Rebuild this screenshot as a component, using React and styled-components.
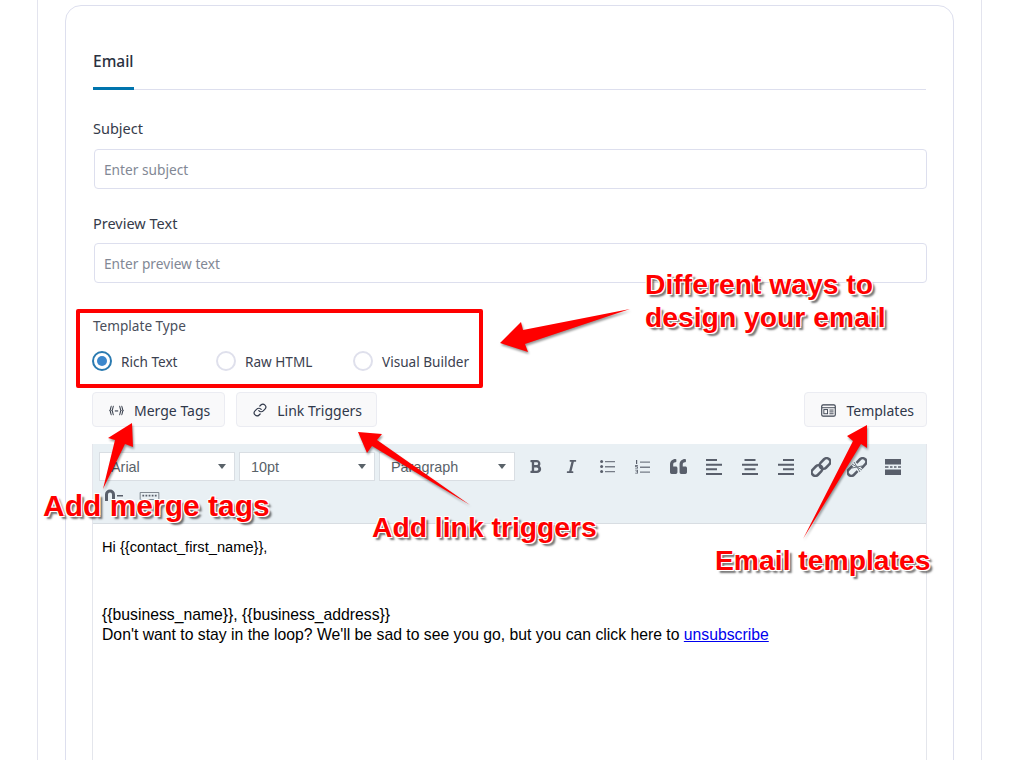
import React from 'react'
import styled, { createGlobalStyle } from 'styled-components'
import { FaBold, FaItalic, FaQuoteLeft } from 'react-icons/fa'
import { Link } from 'lucide-react'

const GlobalStyle = createGlobalStyle`
  html, body {
    margin: 0;
    height: 760px;
    overflow: hidden;
    background: #fff;
    font-family: "Noto Sans", "Open Sans", sans-serif;
  }
`

const Page = styled.div`
  position: relative;
  width: 1020px;
  height: 760px;
  overflow: hidden;
  padding: 0 38px 0 37px;
  box-sizing: border-box;
`

const Frame = styled.div`
  height: 760px;
  box-sizing: border-box;
  border-left: 1px solid #e3e4ee;
  border-right: 1px solid #e3e4ee;
  padding: 5px 27px 0;
`

const Card = styled.div`
  height: 900px;
  box-sizing: border-box;
  border: 1px solid #dddfee;
  border-radius: 16px;
  padding: 38px 27px 0;
`

const Tabs = styled.div`
  height: 46px;
  box-sizing: border-box;
  border-bottom: 1px solid #dddfee;
  display: flex;
`

const Tab = styled.div`
  height: 46px;
  box-sizing: border-box;
  padding-top: 7px;
  border-bottom: 3px solid #0074ad;
  font-size: 15.5px;
  line-height: 20px;
  font-weight: 500;
  color: #2a3140;
`

const Field = styled.div`
  margin-top: ${props => props.$top}px;
  margin-right: -1px;
  padding-left: 1px;
`

const Label = styled.div`
  font-size: 14.5px;
  line-height: 20px;
  color: #353b4a;
  margin-left: -1px;
  margin-bottom: ${props => props.$gap}px;
`

const Input = styled.input`
  display: block;
  width: 100%;
  height: 40px;
  box-sizing: border-box;
  border: 1px solid #dddfee;
  border-radius: 4px;
  padding: 0 9px;
  font-family: inherit;
  font-size: 13.7px;
  color: #333;
  background: #fff;
  &::placeholder {
    color: #828895;
    opacity: 1;
  }
`

const TemplateType = styled.div`
  margin-top: 33px;
`

const SmallLabel = styled.div`
  font-size: 13.6px;
  line-height: 20px;
  color: #4a4f5c;
`

const RadioRow = styled.div`
  display: flex;
  align-items: center;
  margin-top: 15px;
  margin-left: -1px;
  height: 20px;
`

const Radio = styled.label`
  display: flex;
  align-items: center;
  gap: 9px;
  width: ${props => props.$width}px;
  font-size: 13.6px;
  color: #3b4150;
`

const RadioMark = styled.span`
  width: 20px;
  height: 20px;
  flex: none;
  box-sizing: border-box;
  border-radius: 50%;
  border: 2px solid ${props => (props.$on ? '#2a7ab0' : '#dfe0ec')};
  display: flex;
  align-items: center;
  justify-content: center;
  &::after {
    content: '';
    width: 10px;
    height: 10px;
    border-radius: 50%;
    background: ${props => (props.$on ? '#3b87cc' : 'transparent')};
  }
`

const ButtonRow = styled.div`
  display: flex;
  gap: 11px;
  margin-top: 21px;
  margin-left: -1px;
  margin-right: -1px;
`

const ToolButton = styled.button`
  height: 35px;
  box-sizing: border-box;
  display: flex;
  align-items: center;
  gap: 10px;
  padding: 1px ${props => (props.$right ? 12 : 14)}px 0 16px;
  margin-left: ${props => (props.$right ? 'auto' : '0')};
  border: 1px solid #ebecf2;
  border-radius: 4px;
  background: #f9f9fa;
  font-family: inherit;
  font-size: 14px;
  color: #30384a;
`

const Editor = styled.div`
  margin-top: 17px;
  margin-left: -1px;
  margin-right: -1px;
  border-left: 1px solid #e4e6ec;
  border-right: 1px solid #e4e6ec;
`

const Toolbar = styled.div`
  height: 80px;
  box-sizing: border-box;
  background: #e9f0f4;
  border-bottom: 1px solid #d8dde2;
  padding: 8px 0 0 6px;
  display: flex;
  flex-wrap: wrap;
  align-content: flex-start;
`

const Select = styled.div`
  width: 136px;
  height: 29px;
  margin-right: 4px;
  box-sizing: border-box;
  background: #fff;
  border: 1px solid #d9dee3;
  display: flex;
  align-items: center;
  justify-content: space-between;
  padding: 0 8px 0 11px;
  font-family: "Liberation Sans", Arial, sans-serif;
  font-size: 14.4px;
  color: #596269;
  &::after {
    content: '';
    border-left: 4px solid transparent;
    border-right: 4px solid transparent;
    border-top: 5px solid #596269;
  }
`

const IconButton = styled.span`
  width: 35.7px;
  height: 29px;
  flex: none;
  display: flex;
  align-items: center;
  justify-content: center;
  color: #595f6b;
  margin-left: ${props => props.$left || 0}px;
`

const EditorBody = styled.div`
  min-height: 400px;
  padding: 13px 9px 0;
  font-family: "Liberation Sans", Arial, sans-serif;
  font-size: 15.75px;
  line-height: 20px;
  color: #000;
`

const Para = styled.p`
  margin: 0 0 ${props => props.$gap || 0}px;
  font-size: ${props => props.$size || 15.75}px;
`

const Unsub = styled.a`
  color: #0000ee;
  text-decoration: underline;
`

const Highlight = styled.div`
  position: absolute;
  left: 76px;
  top: 309px;
  width: 407px;
  height: 79px;
  box-sizing: border-box;
  border: 4px solid #ff0000;
  border-radius: 2px;
`

const ArrowLayer = styled.svg`
  position: absolute;
  left: 0;
  top: 0;
  width: 1020px;
  height: 760px;
  pointer-events: none;
  filter: drop-shadow(1px 2px 1px rgba(0, 0, 0, 0.4));
`

const Callout = styled.div`
  position: absolute;
  left: ${props => props.$x}px;
  top: ${props => props.$y}px;
  font-family: "Liberation Sans", Arial, sans-serif;
  font-weight: 700;
  font-size: ${props => props.$size || 28.3}px;
  line-height: 33px;
  white-space: nowrap;
  color: #ff0000;
  text-shadow: 1px 1px 0 #fff, -1px -1px 0 #fff, 1px -1px 0 #fff, -1px 1px 0 #fff,
    3px 3px 2px rgba(0, 0, 0, 0.55);
`

const MergeIcon = () => (
  <svg width="15" height="11" viewBox="0 0 17 12" fill="none" stroke="#3c4350" strokeWidth="1.3">
    <path d="M3 1C1.6 1 2.2 5.2 1 6c1.2.8.6 5 2 5M5.4 1C4 1 4.6 5.2 3.4 6c1.2.8.6 5 2 5" />
    <path d="M14 1c1.4 0 .8 4.2 2 5-1.2.8-.6 5-2 5M11.6 1c1.4 0 .8 4.2 2 5-1.2.8-.6 5-2 5" />
    <path d="M6.600 6.500h3.800" />
  </svg>
)

const TemplateIcon = () => (
  <svg width="15" height="13" viewBox="0 0 16 14" fill="none" stroke="#3c4350">
    <rect x="0.7" y="1" width="14.6" height="12" rx="1.500" strokeWidth="1.200" />
    <path d="M1 4h14" strokeWidth="1" />
    <rect x="3" y="6" width="4" height="4.500" strokeWidth="1" />
    <path d="M9 6.500h4.500M9 8.500h4.500M9 10.500h4.500" strokeWidth="1" />
  </svg>
)

const BulletIcon = () => (
  <svg width="15" height="13" viewBox="0 0 15 13" fill="#595f6b">
    <circle cx="1.600" cy="1.500" r="1.500" />
    <circle cx="1.600" cy="6.500" r="1.500" />
    <circle cx="1.600" cy="11.500" r="1.500" />
    <path d="M5 1h10v1.200H5zM5 6h10v1.400H5zM5 11h10v1.200H5z" opacity="0.8" />
  </svg>
)

const NumberIcon = () => (
  <svg width="15" height="14" viewBox="0 0 15 14" fill="#595f6b">
    <path d="M1 0h1.200v4H1zM.2 5h2.800v.8H1.400v.6H3v2H.2v-.7h2v-.6H.2zM.2 9.800H3V13.500H.2v-.7h2V12H.8v-.6h1.400v-.9H.2z" />
    <path d="M5 1.500h10v1.200H5zM5 6.500h10v1.400H5zM5 11.500h10v1.200H5z" opacity="0.8" />
  </svg>
)

const ALIGN_ROWS = {
  left: 'M0 0h11v2H0zM0 4.700h16v2H0zM0 9.300h11v2H0zM0 14h16v2H0z',
  center: 'M2.500 0h11v2h-11zM0 4.700h16v2H0zM2.500 9.300h11v2h-11zM0 14h16v2H0z',
  right: 'M5 0h11v2H5zM0 4.700h16v2H0zM5 9.300h11v2H5zM0 14h16v2H0z',
}

const AlignIcon = ({ kind }) => (
  <svg width="16" height="16" viewBox="0 0 16 16" fill="#595f6b">
    <path d={ALIGN_ROWS[kind]} />
  </svg>
)

const BreakIcon = () => (
  <svg width="16" height="16" viewBox="0 0 16 16" fill="#595f6b">
    <path d="M0 0h16v5.500H0zM0 10.500h16V16H0zM0 7.300h3.500v1.400H0zM5 7.300h2.500v1.400H5zM9 7.300h2.500v1.400H9zM13 7.300h3v1.400h-3z" />
  </svg>
)

const ChainLoops = () => (
  <g fill="none" stroke="#595f6b" strokeWidth="2.500">
    <rect x="8" y="2.800" width="12" height="7.400" rx="3.700" transform="rotate(-45 14 6.500)" />
    <rect x="0" y="9.800" width="12" height="7.400" rx="3.700" transform="rotate(-45 6 13.500)" />
  </g>
)

const LinkIcon = () => (
  <svg width="20" height="20" viewBox="0 0 20 20">
    <ChainLoops />
  </svg>
)

const UnlinkIcon = () => (
  <svg width="20" height="20" viewBox="0 0 20 20">
    <ChainLoops />
    <path d="M6 6l8 8" stroke="#e9f0f4" strokeWidth="5" />
    <path d="M10 10L7 5M10 10L5 7M10 10l3 5M10 10l5 3M10 10l5-1M10 10L5 11" stroke="#6d7680" strokeWidth="1" />
  </svg>
)

const ImageIcon = () => (
  <svg width="20" height="13" viewBox="0 0 20 13" fill="#595f6b">
    <path d="M1 12V5.500a5 5 0 0 1 10 0V12H8V5.500a2 2 0 0 0-4 0V12z" />
    <path d="M13 6h6v1.500h-6z" />
  </svg>
)

const KeyboardIcon = () => (
  <svg width="21" height="8" viewBox="0 0 22 9" fill="#595f6b">
    <path d="M.5.500h21v8H.5z" fill="none" stroke="#6d7680" />
    <path d="M3 3h2v2H3zM6.500 3h2v2h-2zM10 3h2v2h-2zM13.500 3h2v2h-2zM17 3h2v2h-2z" />
  </svg>
)

const Arrow = ({ points }) => <polygon points={points} fill="#ff0000" />

const App = () => (
  <Page>
    <GlobalStyle />
    <Frame>
      <Card>
        <Tabs>
          <Tab>Email</Tab>
        </Tabs>
        <Field $top={28}>
          <Label $gap={11}>Subject</Label>
          <Input placeholder="Enter subject" readOnly />
        </Field>
        <Field $top={24}>
          <Label $gap={10}>Preview Text</Label>
          <Input placeholder="Enter preview text" readOnly />
        </Field>
        <TemplateType>
          <SmallLabel>Template Type</SmallLabel>
          <RadioRow>
            <Radio $width={124}>
              <RadioMark $on />
              Rich Text
            </Radio>
            <Radio $width={137}>
              <RadioMark />
              Raw HTML
            </Radio>
            <Radio $width={130}>
              <RadioMark />
              Visual Builder
            </Radio>
          </RadioRow>
        </TemplateType>
        <ButtonRow>
          <ToolButton>
            <MergeIcon />
            Merge Tags
          </ToolButton>
          <ToolButton>
            <Link size={14} strokeWidth={2} color="#30384a" />
            Link Triggers
          </ToolButton>
          <ToolButton $right>
            <TemplateIcon />
            Templates
          </ToolButton>
        </ButtonRow>
        <Editor>
          <Toolbar>
            <Select>Arial</Select>
            <Select>10pt</Select>
            <Select>Paragraph</Select>
            <IconButton $left={-1}><FaBold size={15} /></IconButton>
            <IconButton><FaItalic size={15} /></IconButton>
            <IconButton><BulletIcon /></IconButton>
            <IconButton><NumberIcon /></IconButton>
            <IconButton><FaQuoteLeft size={17} /></IconButton>
            <IconButton><AlignIcon kind="left" /></IconButton>
            <IconButton><AlignIcon kind="center" /></IconButton>
            <IconButton><AlignIcon kind="right" /></IconButton>
            <IconButton><LinkIcon /></IconButton>
            <IconButton><UnlinkIcon /></IconButton>
            <IconButton><BreakIcon /></IconButton>
            <IconButton $left={-3}><ImageIcon /></IconButton>
            <IconButton><KeyboardIcon /></IconButton>
          </Toolbar>
          <EditorBody>
            <Para $gap={48} $size={14.67}>Hi {'{{contact_first_name}}'},</Para>
            <Para>{'{{business_name}}, {{business_address}}'}</Para>
            <Para>
              Don't want to stay in the loop? We'll be sad to see you go, but you can click here to{' '}
              <Unsub href="#">unsubscribe</Unsub>
            </Para>
          </EditorBody>
        </Editor>
      </Card>
    </Frame>
    <Highlight />
    <ArrowLayer viewBox="0 0 1020 760">
      <Arrow points="630,309 523,330 521,322 500,343 528,352 525,344" />
      <Arrow points="132,423 108,438 115,440 103,489 125,444 133,447" />
      <Arrow points="358,432 382,434 377,440 470,505 372,446 367,453" />
      <Arrow points="867,425 847,436 853,441 803,539 861,444 867,448" />
    </ArrowLayer>
    <Callout $x={645} $y={268}>Different ways to<br />design your email</Callout>
    <Callout $x={43} $y={489} $size={30}>Add merge tags</Callout>
    <Callout $x={372} $y={511}>Add link triggers</Callout>
    <Callout $x={715} $y={544}>Email templates</Callout>
  </Page>
)

export default App
